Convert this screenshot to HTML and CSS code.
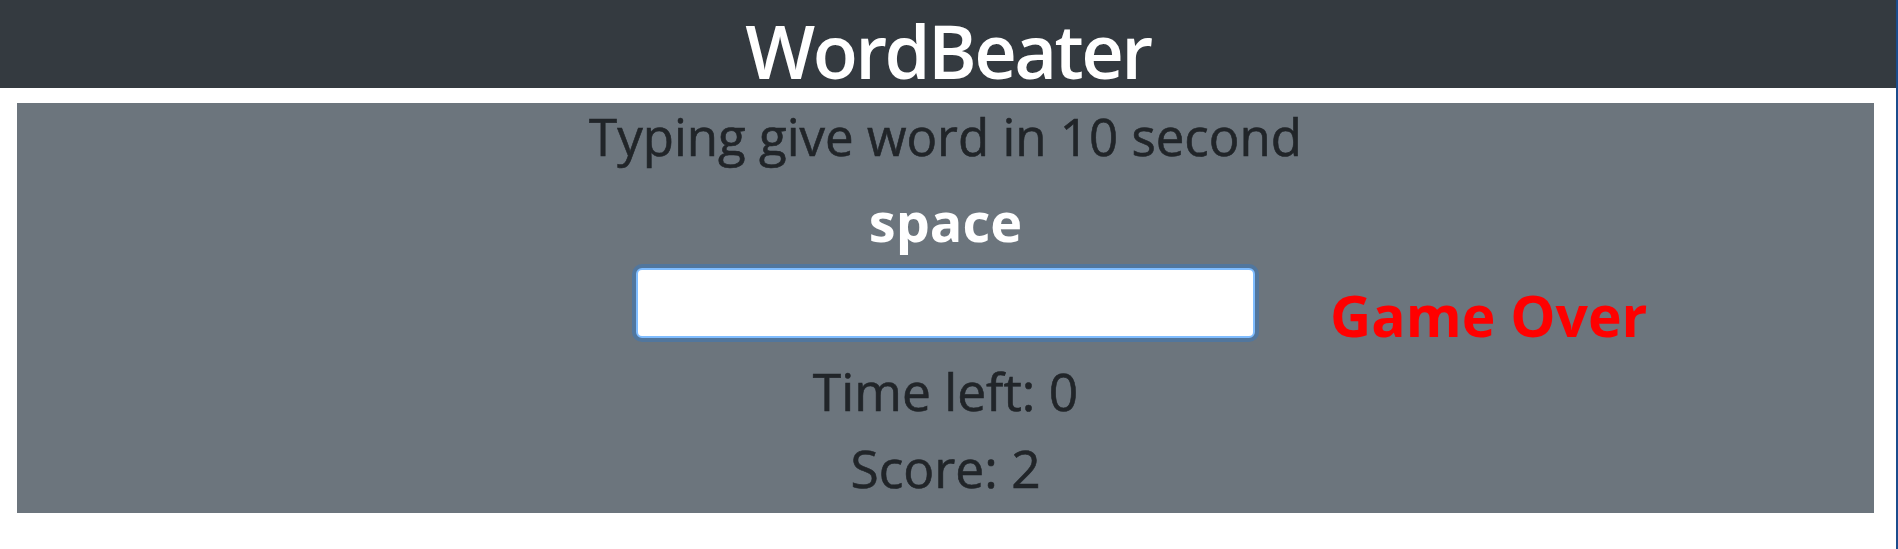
FILE: index.html
```html
<!DOCTYPE html>
<html lang="en">
<head>
<meta charset="utf-8">
<title>WordBeater</title>
<link rel="stylesheet" href="styles.css">
</head>
<body>
<div class="page">
  <header class="topbar">
    <h1 class="brand">WordBeater</h1>
  </header>
  <main class="panel">
    <p class="lead">Typing give word in 10 second</p>
    <h2 class="word">space</h2>
    <div class="input-row">
      <div class="col"></div>
      <div class="col"><input class="word-input" type="text" aria-label="word"></div>
      <div class="col"><span class="status">Game Over</span></div>
    </div>
    <p class="stat stat-time">Time left: 0</p>
    <p class="stat stat-score">Score: 2</p>
  </main>
</div>
</body>
</html>
```
FILE: styles.css
```css
html, body {
  margin: 0;
  padding: 0;
  background: #ffffff;
}
body {
  font-family: "Open Sans", "Noto Sans", sans-serif;
  color: #212529;
}
.page {
  min-height: 549px;
  border-right: 2px solid #1b4c8c;
  box-sizing: border-box;
  overflow: hidden;
}
.topbar {
  background: #343a40;
  height: 88px;
  box-sizing: border-box;
  padding-top: 14px;
  text-align: center;
}
.brand {
  margin: 0;
  font-size: 74px;
  font-weight: 600;
  letter-spacing: -2.6px;
  line-height: 74px;
  color: #ffffff;
}
.panel {
  margin: 15px 22px 0 17px;
  background: #6c757d;
  text-align: center;
  padding-top: 1px;
  padding-bottom: 13px;
}
.lead {
  margin: 0;
  font-size: 51px;
  line-height: 64px;
  -webkit-text-stroke: 0.6px #212529;
}
.word {
  margin: 21px 0 0;
  font-size: 54px;
  font-weight: 700;
  line-height: 64px;
  color: #ffffff;
}
.input-row {
  margin-top: 15px;
  display: grid;
  grid-template-columns: 1fr 1fr 1fr;
}
.word-input {
  display: block;
  width: 100%;
  height: 70px;
  box-sizing: border-box;
  border: 2px solid #80bdff;
  border-radius: 6px;
  box-shadow: 0 0 0 4px rgba(0, 123, 255, 0.25);
  background: #ffffff;
  outline: none;
  padding: 0;
  font-size: 30px;
}
.status {
  display: block;
  text-align: left;
  padding-left: 75px;
  margin-top: 24px;
  font-size: 57px;
  font-weight: 700;
  line-height: 46px;
  color: #ff0000;
}
.stat {
  margin: 0;
  font-size: 51.5px;
  line-height: 64px;
  -webkit-text-stroke: 0.6px #212529;
}
.stat-time {
  margin-top: 21px;
}
.stat-score {
  margin-top: 13px;
}
```
